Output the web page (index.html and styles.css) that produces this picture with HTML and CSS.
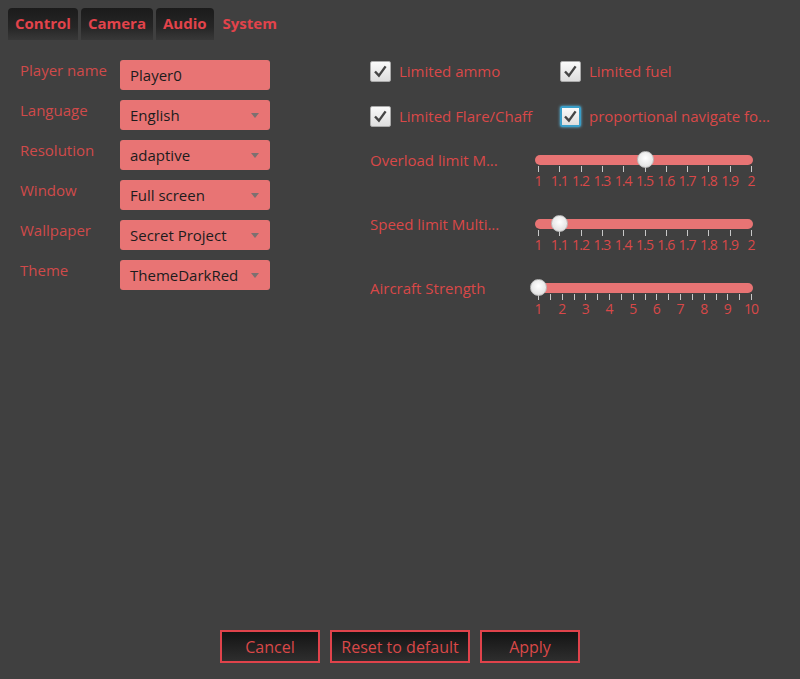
FILE: index.html
```html
<!DOCTYPE html>
<html lang="en">
<head>
    <meta charset="UTF-8">
    <meta name="viewport" content="width=device-width, initial-scale=1.0">
    <title>Settings</title>
    <link rel="stylesheet" href="styles.css">
</head>
<body>
    <div class="tabs">
        <div class="tab">Control</div>
        <div class="tab">Camera</div>
        <div class="tab">Audio</div>
        <div class="tab active">System</div>
    </div>

    <div class="main">
        <div class="fields">
            <label class="field-label" for="player">Player name</label>
            <input class="field-input" type="text" id="player" value="Player0">

            <span class="field-label">Language</span>
            <div class="dropdown">English</div>

            <span class="field-label">Resolution</span>
            <div class="dropdown">adaptive</div>

            <span class="field-label">Window</span>
            <div class="dropdown">Full screen</div>

            <span class="field-label">Wallpaper</span>
            <div class="dropdown">Secret Project</div>

            <span class="field-label">Theme</span>
            <div class="dropdown">ThemeDarkRed</div>
        </div>

        <div class="options">
            <div class="checks">
                <div class="check"><span class="box"></span>Limited ammo</div>
                <div class="check"><span class="box"></span>Limited fuel</div>
                <div class="check"><span class="box"></span>Limited Flare/Chaff</div>
                <div class="check"><span class="box focused"></span>proportional navigate fo...</div>
            </div>

            <div class="slider-row">
                <span class="slider-label">Overload limit M...</span>
                <div class="slider" data-min="1" data-max="2" data-step="0.1" data-tick="0.1" data-value="1.5"></div>
            </div>
            <div class="slider-row">
                <span class="slider-label">Speed limit Multi...</span>
                <div class="slider" data-min="1" data-max="2" data-step="0.1" data-tick="0.1" data-value="1.1"></div>
            </div>
            <div class="slider-row">
                <span class="slider-label">Aircraft Strength</span>
                <div class="slider" data-min="1" data-max="10" data-step="1" data-tick="0.5" data-value="1"></div>
            </div>
        </div>
    </div>

    <div class="footer">
        <button class="btn">Cancel</button>
        <button class="btn wide">Reset to default</button>
        <button class="btn">Apply</button>
    </div>

    <script>
        // checkmark for every box
        document.querySelectorAll('.box').forEach(function(box) {
            box.innerHTML = '<svg width="21" height="21" viewBox="0 0 21 21"><path d="M5 10.5 L8.9 14.6 L15.6 5.4" fill="none" stroke="#454545" stroke-width="2.4"/></svg>';
        });

        // build track, ticks, numbers and thumb for each slider
        document.querySelectorAll('.slider').forEach(function(el) {
            const min = parseFloat(el.dataset.min);
            const max = parseFloat(el.dataset.max);
            const step = parseFloat(el.dataset.step);
            const tick = parseFloat(el.dataset.tick);
            const value = parseFloat(el.dataset.value);
            const span = 213;
            const pos = function(v) { return 3 + (v - min) / (max - min) * span; };

            let html = '<div class="track"></div>';
            for (let v = min; v <= max + 0.0001; v += tick) {
                html += '<span class="tick" style="left:' + pos(v).toFixed(1) + 'px"></span>';
            }
            for (let v = min; v <= max + 0.0001; v += step) {
                const text = Math.round(v * 10) / 10;
                html += '<span class="num" style="left:' + pos(v).toFixed(1) + 'px">' + text + '</span>';
            }
            html += '<span class="thumb" style="left:' + pos(value).toFixed(1) + 'px"></span>';
            el.innerHTML = html;
        });
    </script>
</body>
</html>
```

FILE: styles.css
```css
body {
    margin: 0;
    min-height: 100vh;
    display: flex;
    flex-direction: column;
    background-color: #404040;
    font-family: "Open Sans", "Noto Sans", sans-serif;
    font-size: 15px;
    color: #d94848;
}
.tabs {
    display: flex;
    gap: 3px;
    padding: 8px 8px 0;
}
.tab {
    height: 32px;
    line-height: 31px;
    padding: 0 7px;
    border-radius: 4px 4px 0 0;
    background: linear-gradient(#1b1b1b, #262626 60%, #383838);
    font-weight: bold;
    color: #e2434b;
}
.tab.active {
    background: none;
    padding: 0 6px;
}
.main {
    flex: 1;
    display: flex;
    gap: 100px;
    padding: 20px 0 0 20px;
}
.fields {
    display: grid;
    grid-template-columns: 100px 150px;
    grid-auto-rows: 30px;
    row-gap: 10px;
    align-self: flex-start;
}
.field-label {
    line-height: 20px;
    color: #d04a4a;
}
.field-input, .dropdown {
    box-sizing: border-box;
    height: 30px;
    padding: 0 10px;
    border: none;
    border-radius: 3px;
    background-color: #e87474;
    font: inherit;
    line-height: 31px;
    color: #1c1c1c;
    outline: none;
}
.dropdown {
    position: relative;
}
.dropdown::after {
    content: "";
    position: absolute;
    right: 11px;
    top: 13px;
    border-left: 4px solid transparent;
    border-right: 4px solid transparent;
    border-top: 5px solid #7c7070;
}
.options {
    display: flex;
    flex-direction: column;
    width: 410px;
}
.checks {
    display: grid;
    grid-template-columns: 190px 220px;
    grid-auto-rows: 22px;
    row-gap: 23px;
}
.check {
    display: flex;
    align-items: center;
    gap: 8px;
    white-space: nowrap;
}
.box {
    box-sizing: border-box;
    width: 21px;
    height: 21px;
    border: 1px solid #a9a9a9;
    border-radius: 2px;
    background: linear-gradient(#fafafa, #dedede);
}
.box svg {
    display: block;
    margin: -1px;
}
.box.focused {
    border: 2px solid #3a9ec8;
    box-shadow: 0 0 3px #5fc4ee;
}
.box.focused svg {
    margin: -2px;
}
.slider-row {
    display: flex;
    height: 40px;
    margin-top: 24px;
}
.checks + .slider-row {
    margin-top: 23px;
}
.slider-label {
    width: 165px;
    line-height: 20px;
    white-space: nowrap;
}
.slider {
    position: relative;
    width: 218px;
}
.track {
    position: absolute;
    left: 0;
    right: 0;
    top: 5px;
    height: 10px;
    border-radius: 5px;
    background-color: #e87474;
}
.tick {
    position: absolute;
    top: 16px;
    width: 1px;
    height: 6px;
    background-color: #c8c8c8;
}
.num {
    position: absolute;
    top: 23px;
    transform: translateX(-50%);
    font-size: 14px;
    letter-spacing: -0.9px;
    line-height: 16px;
    color: #d94848;
}
.thumb {
    position: absolute;
    top: 1px;
    width: 17px;
    height: 17px;
    margin-left: -8px;
    border-radius: 50%;
    box-sizing: border-box;
    border: 1px solid #bdbdbd;
    background: radial-gradient(circle at 50% 40%, #ffffff, #e4e4e4 70%, #cfcfcf);
}
.footer {
    display: flex;
    justify-content: center;
    gap: 10px;
    padding-bottom: 16px;
}
.btn {
    width: 100px;
    height: 33px;
    border: 2px solid #e0434b;
    background: linear-gradient(#141414, #2e2e2e);
    font: inherit;
    font-size: 16px;
    color: #d94848;
    cursor: pointer;
}
.btn.wide {
    width: 140px;
}
```
